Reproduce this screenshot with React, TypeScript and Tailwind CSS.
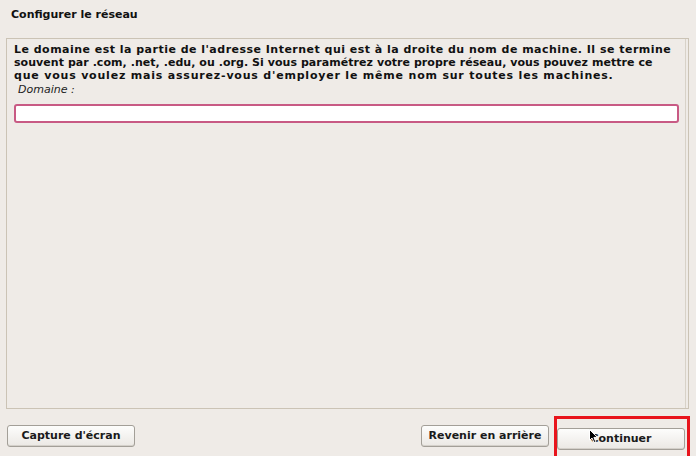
import React from "react";

function Cursor() {
  return (
    <svg
      className="absolute left-[32px] top-[10px]"
      width="10"
      height="15"
      viewBox="0 0 10 15"
    >
      <path
        d="M0.5 0.5 L0.5 11.5 L3 9 L5 13.5 L6.8 12.7 L4.9 8.4 L8.5 8.4 Z"
        fill="#000"
        stroke="#fff"
        strokeWidth="1"
      />
    </svg>
  );
}

function Button({ label, className }: { label: string; className: string }) {
  return (
    <button
      className={`h-[22px] shrink-0 rounded-[3px] border border-[#a39f98] bg-gradient-to-b from-[#fdfdfc] to-[#ebe8e4] text-[11px] font-bold text-[#1a1a1a] shadow-[inset_0_-1px_0_#d4d0ca] ${className}`}
    >
      {label}
    </button>
  );
}

export default function App() {
  return (
    <div className="relative flex h-[456px] w-[696px] flex-col overflow-hidden bg-[#efebe7] font-['DejaVu_Sans',sans-serif] text-[#111]">
      <div className="shrink-0 px-[11px] pt-[8px] text-[11px] font-bold leading-[14px]">
        Configurer le réseau
      </div>

      <div className="ml-[6px] mr-[7px] mt-[16px] h-[371px] shrink-0 border border-[#cbc3b5] px-[7px] pt-[4px] shadow-[inset_-2px_0_0_#efebe7,inset_-3px_0_0_#d8d2c8]">
        <div className="whitespace-nowrap text-[11px] font-bold leading-[13px]">
          <div className="tracking-[0.48px]">
            Le domaine est la partie de l'adresse Internet qui est à la droite
            du nom de machine. Il se termine
          </div>
          <div className="tracking-[0.05px]">
            souvent par .com, .net, .edu, ou .org. Si vous paramétrez votre
            propre réseau, vous pouvez mettre ce
          </div>
          <div className="tracking-[0.8px]">
            que vous voulez mais assurez-vous d'employer le même nom sur toutes
            les machines.
          </div>
        </div>
        <div className="mt-[1px] pl-[4px] text-[11px] italic leading-[14px] text-[#222]">
          Domaine :
        </div>
        <div className="mr-[2px] mt-[7px] h-[19px] rounded-[3px] border-2 border-[#c85a84] bg-white" />
      </div>

      <div className="flex shrink-0 items-start px-[7px] pt-[7px]">
        <Button label="Capture d'écran" className="mt-[9px] w-[128px]" />
        <div className="flex-1" />
        <Button label="Revenir en arrière" className="mt-[9px] w-[128px]" />
        <div className="relative ml-[5px] mr-[-1px] border-[3px] border-[#e8141c] pb-[6px] pl-0 pr-[2px] pt-[6px]">
          <Button label="Continuer" className="w-[128px]" />
          <Cursor />
        </div>
      </div>
    </div>
  );
}
